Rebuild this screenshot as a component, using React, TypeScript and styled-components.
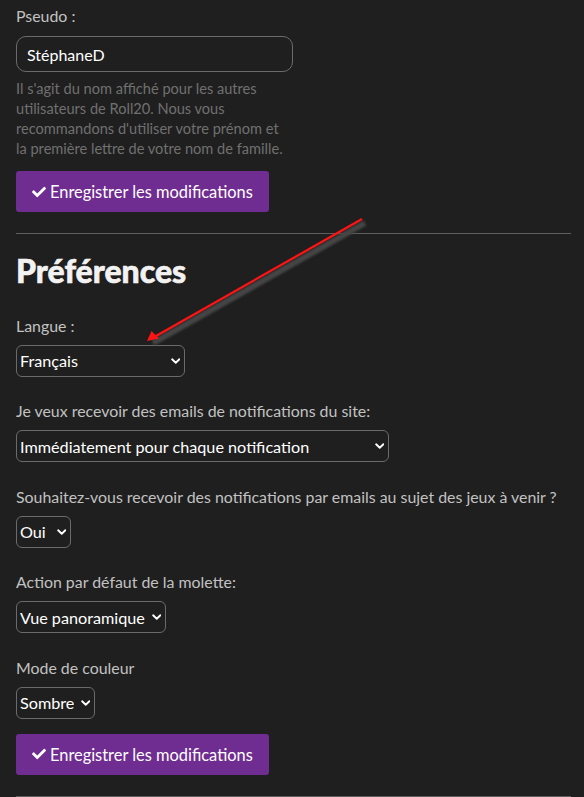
import styled, {createGlobalStyle} from 'styled-components';
import {FaCheck} from 'react-icons/fa';


const GlobalStyle = createGlobalStyle`
    html, body {
        margin: 0;
        padding: 0;
        background: #1f1f1f;
    }
    body {
        font-family: Lato, "Open Sans", sans-serif;
        color: #c4c4c4;
    }
`;


/**
 * Select avec chevron dessiné
 */
const SelectBox = ({value, width}: {value: string, width: number}) => (
    <SelectWrap>
        <Select defaultValue={value} $width={width}>
            <option>{value}</option>
        </Select>
        <Chevron viewBox="0 0 10 6" aria-hidden>
            <path d="M1.2 1.2l3.8 3.6 3.8-3.6" fill="none" stroke="#fff" strokeWidth="2" strokeLinecap="round" strokeLinejoin="round"/>
        </Chevron>
    </SelectWrap>
);


const SaveButton = ({top}: {top: number}) => (
    <Button type="button" $top={top}>
        <FaCheck size={14}/>
        Enregistrer les modifications
    </Button>
);


const App = () => {
    return <Page>
        <GlobalStyle/>

        <Label $first>Pseudo :</Label>
        <TextInput defaultValue="StéphaneD"/>
        <Help>
            Il s'agit du nom affiché pour les autres<br/>
            utilisateurs de Roll20. Nous vous<br/>
            recommandons d'utiliser votre prénom et<br/>
            la première lettre de votre nom de famille.
        </Help>
        <SaveButton top={12}/>

        <Divider/>

        <Title>Préférences</Title>

        <Field>
            <Label>Langue :</Label>
            <SelectBox value="Français" width={169}/>
        </Field>
        <Field>
            <Label>Je veux recevoir des emails de notifications du site:</Label>
            <SelectBox value="Immédiatement pour chaque notification" width={373}/>
        </Field>
        <Field>
            <Label>Souhaitez-vous recevoir des notifications par emails au sujet des jeux à venir ?</Label>
            <SelectBox value="Oui" width={55}/>
        </Field>
        <Field>
            <Label>Action par défaut de la molette:</Label>
            <SelectBox value="Vue panoramique" width={150}/>
        </Field>
        <Field>
            <Label>Mode de couleur</Label>
            <SelectBox value="Sombre" width={79}/>
        </Field>

        <SaveButton top={15}/>
        <Divider/>

        <Arrow viewBox="0 0 584 797" aria-hidden>
            <defs>
                <filter id="shadow" x="-10%" y="-10%" width="130%" height="130%">
                    <feGaussianBlur stdDeviation="1.2"/>
                </filter>
            </defs>
            <g filter="url(#shadow)">
                <line x1="365" y1="223" x2="153" y2="343" stroke="#444" strokeWidth="6"/>
            </g>
            <line x1="362" y1="219" x2="156" y2="336" stroke="#ff1414" strokeWidth="2.2"/>
            <path d="M147 341 L151.5 331 L159 338.5 Z" fill="#ff1414"/>
        </Arrow>
    </Page>;
};

export default App;



const Page = styled.div`
    position: relative;
    display: flex;
    flex-direction: column;
    align-items: flex-start;
    padding: 0 13px 0 16px;
    min-height: 797px;
    box-sizing: border-box;
`;

const Label = styled.div<{ $first?: boolean }>`
    font-size: 15.9px;
    line-height: 22px;
    color: #c2c2c2;
    white-space: nowrap;
    margin: ${p => p.$first ? '5px 0 9px' : '0 0 8px'};
`;

const TextInput = styled.input`
    box-sizing: border-box;
    width: 277px;
    height: 36px;
    border: 1px solid #6b6b6b;
    border-radius: 10px;
    background: transparent;
    color: #fff;
    font-family: Lato, sans-serif;
    font-size: 16px;
    padding: 0 10px;
    outline: none;
`;

const Help = styled.p`
    margin: 7px 0 0;
    font-size: 14.6px;
    line-height: 20px;
    color: #707070;
    white-space: nowrap;
`;

const Button = styled.button<{ $top: number }>`
    display: inline-flex;
    align-items: center;
    gap: 4px;
    box-sizing: border-box;
    width: 253px;
    height: 41px;
    margin-top: ${p => p.$top}px;
    padding: 0 16px;
    border: none;
    border-radius: 3px;
    background: #6f2c91;
    color: #fff;
    font-family: Lato, sans-serif;
    font-size: 16.4px;
    white-space: nowrap;
    cursor: pointer;
`;

const Divider = styled.hr`
    width: 555px;
    margin: 21px 0 0;
    border: none;
    border-top: 1px solid #5e5e5e;
`;

const Title = styled.h2`
    margin: 17px 0 0;
    font-size: 32px;
    line-height: 40px;
    font-weight: 900;
    color: #f2f2f2;
    -webkit-text-stroke: 0.6px #f2f2f2;
`;

const Field = styled.div`
    display: flex;
    flex-direction: column;
    align-items: flex-start;
    margin-top: 23.5px;
`;

const SelectWrap = styled.div`
    position: relative;
    display: inline-flex;
`;

const Select = styled.select<{ $width: number }>`
    appearance: none;
    box-sizing: border-box;
    width: ${p => p.$width}px;
    height: 32px;
    padding: 0 20px 0 3px;
    border: 1px solid #6b6b6b;
    border-radius: 6px;
    background: #1f1f1f;
    color: #fff;
    font-family: Lato, sans-serif;
    font-size: 16.2px;
    outline: none;
`;

const Chevron = styled.svg`
    position: absolute;
    right: 5px;
    top: 13px;
    width: 9.5px;
    height: 6px;
    pointer-events: none;
`;

const Arrow = styled.svg`
    position: absolute;
    left: 0;
    top: 0;
    width: 584px;
    height: 797px;
    pointer-events: none;
`;
